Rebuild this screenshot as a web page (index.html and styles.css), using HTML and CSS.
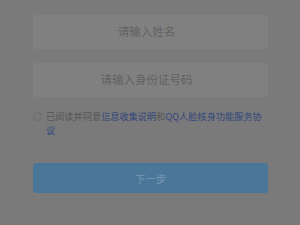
FILE: index.html
```html
<!DOCTYPE html>
<html lang="zh-CN">
<head>
<meta charset="utf-8">
<link rel="stylesheet" href="styles.css">
</head>
<body>
<div class="page">
  <div class="field"><span class="ph">请输入姓名</span></div>
  <div class="field"><span class="ph">请输入身份证号码</span></div>
  <div class="agree">
    <span class="radio"></span>
    <p class="agree-text">已阅读并同意<span class="link">信息收集说明</span>和<span class="link">QQ人脸核身功能服务协</span><span class="link">议</span></p>
  </div>
  <div class="btn">下一步</div>
</div>
</body>
</html>
```
FILE: styles.css
```css
html, body {
  margin: 0;
  padding: 0;
  background: #7a7a7a;
}
body {
  width: 300px;
  height: 225px;
  overflow: hidden;
  font-family: "Noto Sans CJK SC", "Noto Sans", sans-serif;
}
.page {
  padding: 15px 32px 0 33px;
  display: flex;
  flex-direction: column;
}
.field {
  height: 34px;
  background: #808080;
  border-radius: 3px;
  display: flex;
  align-items: center;
  justify-content: center;
  padding-right: 8px;
  margin-bottom: 14px;
}
.field + .field {
  margin-bottom: 0;
}
.ph {
  font-size: 11.5px;
  color: #626262;
  line-height: 1;
}
.agree {
  margin-top: 12px;
  display: flex;
  align-items: flex-start;
  gap: 4px;
}
.radio {
  flex: none;
  width: 7px;
  height: 7px;
  border: 1px solid #6c6c6c;
  border-radius: 50%;
  margin-top: 2.5px;
}
.agree-text {
  margin: 0;
  font-size: 9.2px;
  line-height: 14px;
  color: #555555;
}
.link {
  color: #32477a;
}
.btn {
  margin-top: 26px;
  height: 30px;
  border-radius: 3px;
  background: #4a7798;
  color: #7898b2;
  font-size: 10.5px;
  display: flex;
  align-items: center;
  justify-content: center;
}
```
